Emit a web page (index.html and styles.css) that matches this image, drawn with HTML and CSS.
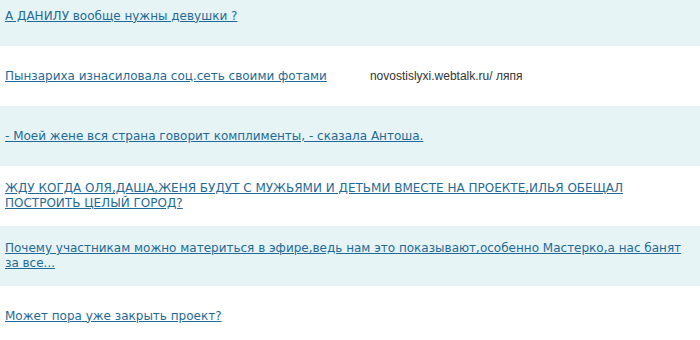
FILE: index.html
```html
<!DOCTYPE html>
<html lang="ru">
  <head>
    <meta charset="UTF-8" />
    <title>Вопросы</title>
    <link rel="stylesheet" href="styles.css">
  </head>
  <body>
    <section class="spisok">
      <div class="stroka chet">
        <a href="#" class="vopros">А ДАНИЛУ вообще нужны девушки ?</a>
      </div>
      <div class="stroka">
        <a href="#" class="vopros">Пынзариха изнасиловала соц.сеть своими фотами</a>
        <span class="istochnik">novostislyxi.webtalk.ru/ ляпя</span>
      </div>
      <div class="stroka chet">
        <a href="#" class="vopros">- Моей жене вся страна говорит комплименты, - сказала Антоша.</a>
      </div>
      <div class="stroka">
        <a href="#" class="vopros">ЖДУ КОГДА ОЛЯ,ДАША,ЖЕНЯ БУДУТ С МУЖЬЯМИ И ДЕТЬМИ ВМЕСТЕ НА ПРОЕКТЕ,ИЛЬЯ ОБЕЩАЛ ПОСТРОИТЬ ЦЕЛЫЙ ГОРОД?</a>
      </div>
      <div class="stroka chet">
        <a href="#" class="vopros">Почему участникам можно материться в эфире,ведь нам это показывают,особенно Мастерко,а нас банят за все...</a>
      </div>
      <div class="stroka">
        <a href="#" class="vopros">Может пора уже закрыть проект?</a>
      </div>
    </section>
  </body>
</html>
```

FILE: styles.css
```css
body {
  margin: 0;
  background: #fff;
  font-family: "DejaVu Sans", sans-serif;
  font-size: 12px;
  line-height: 15px;
}
.spisok {
  margin-top: -14px;
}
.stroka {
  display: flex;
  align-items: center;
  height: 60px;
  padding: 0 10px 0 5px;
}
.chet {
  background-color: #e6f4f6;
}
.vopros {
  color: #1f6a98;
  text-decoration: underline;
}
.istochnik {
  margin-left: 43px;
  font-family: "Liberation Sans", Arial, sans-serif;
  font-size: 12px;
  color: #333;
}
```
